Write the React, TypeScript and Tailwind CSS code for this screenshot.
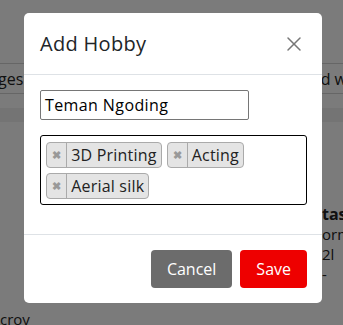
import { X } from "lucide-react";

const TAGS = ["3D Printing", "Acting", "Aerial silk"];

function Backdrop() {
  // page behind the modal, greyed out by the overlay
  return (
    <div className="absolute inset-0 bg-[#f7f7f7] text-[#222]">
      <div className="h-[64px] border-b border-[#ccc]" />
      <div className="flex justify-between h-[30px] border-b border-[#ccc] text-[16px] leading-[30px]">
        <span className="-ml-[2px]">ges</span>
        <span className="mr-[-4px]">d w</span>
      </div>
      <div className="h-[14px] mt-[14px] bg-[#e8e8e8]" />
      <div className="mt-[82px] ml-[322px] font-bold text-[16px] leading-[20px]">tas</div>
      <div className="ml-[322px] text-[15px] leading-[20px]">orm</div>
      <div className="ml-[322px] text-[15px] leading-[20px]">2l -</div>
      <div className="flex mt-[24px] items-start">
        <span className="text-[15px]">croy</span>
      </div>
    </div>
  );
}

export default function App() {
  return (
    <div className="relative w-[343px] h-[325px] overflow-hidden" style={{ fontFamily: "'Open Sans', 'Noto Sans', sans-serif" }}>
      <Backdrop />
      <div className="absolute inset-0 bg-black/50" />
      <div className="absolute left-[24px] top-[13px] w-[298px] h-[290px] bg-white rounded-[5px] flex flex-col">
        <div className="flex items-center justify-between h-[62px] px-[16px] border-b border-[#dee2e6]">
          <h2 className="text-[20px] tracking-[0.3px] text-[#212529]">Add Hobby</h2>
          <X className="w-[24px] h-[24px] text-[#777]" strokeWidth={1.5} />
        </div>
        <div className="px-[16px] pt-[15px] flex-1 border-b border-[#dee2e6]">
          <div className="w-[209px] h-[30px] border border-[#767676] rounded-[2px] px-[4px] text-[16px] leading-[28px] tracking-[0.4px] text-black">
            Teman Ngoding
          </div>
          <div className="mt-[15px] w-[267px] h-[70px] border border-black rounded-[3px] px-[5px] pt-[6px] flex flex-wrap gap-x-[5px] gap-y-[5px] content-start">
            {TAGS.map((t) => (
              <span key={t} className="flex items-stretch h-[26px] bg-[#e4e4e4] border border-[#aaa] rounded-[4px] text-[16px] tracking-[0.2px] text-[#222]">
                <span className="flex items-center px-[5px] border-r border-[#aaa] text-[#999] text-[11px] font-bold">✖</span>
                <span className="flex items-center px-[4px]">{t}</span>
              </span>
            ))}
          </div>
        </div>
        <div className="flex justify-end gap-[8px] px-[15px] pt-[15px] pb-[15px]">
          <button className="h-[38px] px-[16px] rounded-[4px] bg-[#6c6c6c] text-white text-[16px] font-medium">Cancel</button>
          <button className="h-[38px] px-[16px] rounded-[4px] bg-[#ee0000] text-white text-[16px] font-medium">Save</button>
        </div>
      </div>
    </div>
  );
}
